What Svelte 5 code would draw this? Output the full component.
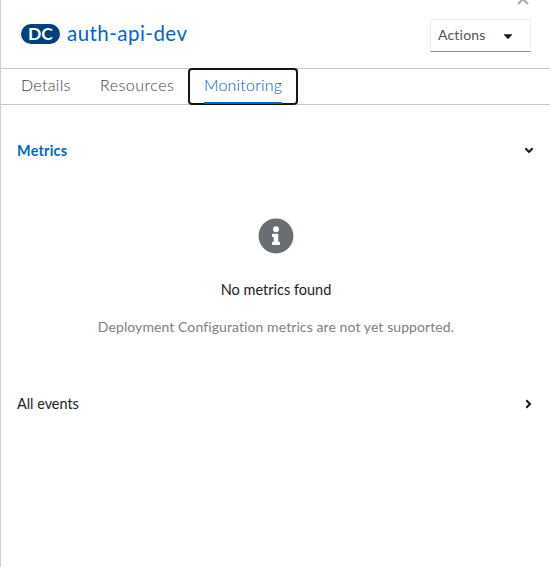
<script>
  const tabs = ['Details', 'Resources', 'Monitoring'];
  let active = $state('Monitoring');
</script>

<aside class="panel">
  <button class="close" aria-label="Close">
    <svg width="12" height="12" viewBox="0 0 12 12"><path d="M1 1l10 10M11 1L1 11" stroke="#aaa" stroke-width="2.2" fill="none" /></svg>
  </button>
  <header>
    <h1><span class="badge"><span>DC</span></span><a href="#top">auth-api-dev</a></h1>
    <button class="actions"><span>Actions</span>
      <svg width="8" height="5" viewBox="0 0 8 5"><path d="M0 .2h8v.9L4.4 4.8h-.8L0 1.1z" fill="#151515" /></svg>
    </button>
  </header>
  <nav>
    {#each tabs as tab}
      <button class={['tab', tab.toLowerCase(), active === tab && 'active']} onclick={() => (active = tab)}><span>{tab}</span></button>
    {/each}
  </nav>
  <section class="row metrics"><span>Metrics</span>
    <svg width="10" height="7" viewBox="0 0 10 7"><path d="M1.3 1.2L5 4.9l3.7-3.7" stroke="#151515" stroke-width="2" fill="none" /></svg>
  </section>
  <div class="empty">
    <svg width="36" height="36" viewBox="0 0 512 512"><path fill="#6a6e73" d="M256 8C119 8 8 119 8 256s111 248 248 248 248-111 248-248S393 8 256 8zm0 110a42 42 0 1 1 0 84 42 42 0 0 1 0-84zm56 254c0 7-5 12-12 12h-88c-7 0-12-5-12-12v-24c0-7 5-12 12-12h12v-64h-12c-7 0-12-5-12-12v-24c0-7 5-12 12-12h64c7 0 12 5 12 12v100h12c7 0 12 5 12 12z" /></svg>
    <h2><span>No metrics found</span></h2>
    <p><span>Deployment Configuration metrics are not yet supported.</span></p>
  </div>
  <section class="row events"><span>All events</span>
    <svg width="7" height="10" viewBox="0 0 7 10"><path d="M1.3 1.2L5 5 1.3 8.8" stroke="#151515" stroke-width="2" fill="none" /></svg>
  </section>
</aside>

<style>
  .panel {
    position: relative;
    box-sizing: border-box;
    width: 550px;
    height: 567px;
    overflow: hidden;
    border-left: 1px solid #d2d2d2;
    background: #fff;
    color: #222;
    font-family: Lato, sans-serif;
  }
  button { border: 0; margin: 0; padding: 0; background: none; font: inherit; }
  svg { display: block; flex: none; }
  .close { position: absolute; left: 516px; top: -7px; }
  header {
    display: flex;
    justify-content: space-between;
    align-items: flex-start;
    box-sizing: border-box;
    height: 69px;
    padding: 19px 19px 0 20px;
    border-bottom: 1px solid #c7c7c7;
  }
  h1 { display: flex; align-items: center; margin: 0; height: 29px; font-size: 20px; font-weight: 400; }
  h1 a { padding-bottom: 2px; color: #06c; text-decoration: none; font-size: 20.5px; letter-spacing: 0.46px; }
  .badge {
    display: flex;
    align-items: center;
    justify-content: center;
    width: 39px;
    height: 20px;
    margin-right: 7px;
    border-radius: 10px;
    background: #004080;
    color: #fff;
    font-size: 17.5px;
    font-weight: 700;
    line-height: 20px;
  }
  .actions {
    display: flex;
    align-items: center;
    justify-content: space-between;
    box-sizing: border-box;
    width: 101px;
    height: 33px;
    padding: 0 18px 0 7px;
    border: 1px solid #ededed;
    border-bottom-color: #8a8d90;
    color: #4f5255;
    font-size: 14px;
    letter-spacing: 0.2px;
  }
  .actions span { padding-bottom: 2px; }
  .actions svg { margin-top: 2px; }
  nav { display: flex; box-sizing: border-box; height: 36px; border-bottom: 1px solid #c7c7c7; }
  .tab {
    position: relative;
    box-sizing: border-box;
    height: 35px;
    padding: 0;
    color: #40444a;
    font-size: 16px;
    font-weight: 300;
    line-height: 30px;
    text-align: left;
    white-space: nowrap;
  }
  .tab span { display: block; padding-bottom: 4px; }
  .details { width: 79px; margin-left: 20px; letter-spacing: 0.3px; }
  .resources { width: 88px; letter-spacing: 0.5px; }
  .monitoring { width: 110px; height: 37px; margin-top: -1px; padding-left: 16px; letter-spacing: 0.2px; }
  .active { color: #0058c4; background: #fff; border-radius: 4px; box-shadow: inset 0 0 0 2px #151515; }
  .active::after { content: ''; position: absolute; left: 16px; right: 16px; bottom: 1px; height: 2px; background: #06c; }
  .row {
    display: flex;
    align-items: center;
    justify-content: space-between;
    height: 24px;
    padding: 0 18px 0 16px;
    font-size: 14.4px;
  }
  .row span { padding-bottom: 2px; }
  .metrics { margin-top: 34px; padding-right: 16px; color: #06c; font-weight: 700; letter-spacing: 0.25px; }
  .metrics svg { margin-top: -1px; }
  .empty { display: flex; flex-direction: column; align-items: center; height: 229px; padding-top: 55px; box-sizing: border-box; }
  h2 { margin: 24px 0 0; padding-left: 1px; font-size: 14.5px; font-weight: 400; line-height: 23px; }
  p { margin: 15px 0 0; padding-left: 1px; color: #7d8085; font-size: 14px; line-height: 22px; letter-spacing: 0.09px; white-space: nowrap; }
</style>
